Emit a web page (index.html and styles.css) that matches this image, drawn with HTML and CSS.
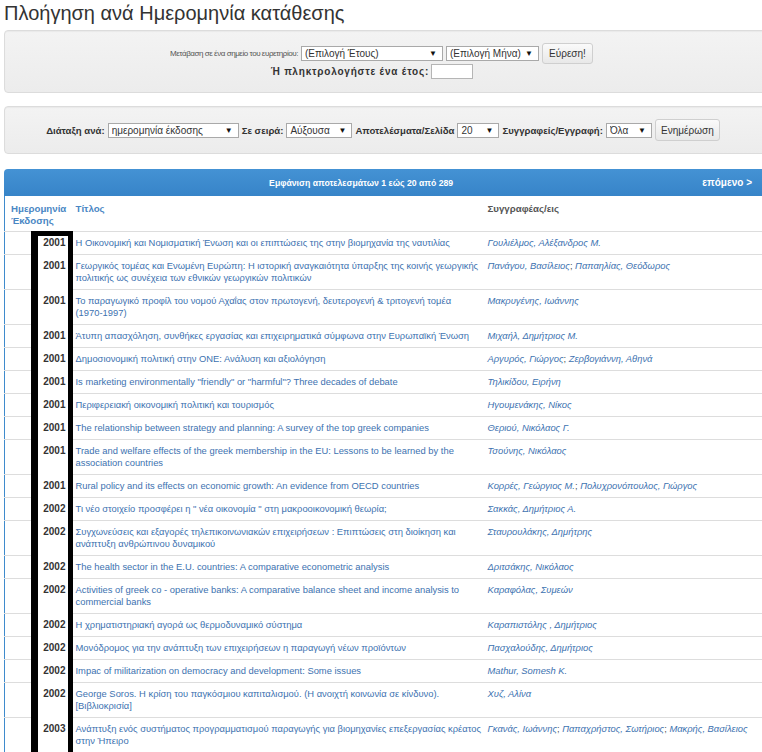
FILE: index.html
```html
<!DOCTYPE html>
<html lang="el">
<head>
<meta charset="utf-8">
<title>Πλοήγηση ανά Ημερομηνία κατάθεσης</title>
<link rel="stylesheet" href="styles.css">
</head>
<body>
<div class="page">
  <h2 class="title">Πλοήγηση ανά Ημερομηνία κατάθεσης</h2>

  <form class="well jump">
    <div class="jump-row">
      <span class="lbl">Μετάβαση σε ένα σημείο του ευρετηρίου:</span>
      <span class="sel sel-year"><select><option>(Επιλογή Έτους)</option></select></span>
      <span class="sel sel-month"><select><option>(Επιλογή Μήνα)</option></select></span>
      <button type="button" class="btn btn-find">Εύρεση!</button>
    </div>
    <div class="jump-row2">
      <span class="lbl-wide">Ή πληκτρολογήστε ένα έτος:</span>
      <input class="year-input" type="text">
    </div>
  </form>

  <form class="well sort">
    <span class="lbl-b">Διάταξη ανά:</span>
    <span class="sel sel-by"><select><option>ημερομηνία έκδοσης</option></select></span>
    <span class="lbl-b">Σε σειρά:</span>
    <span class="sel sel-order"><select><option>Αύξουσα</option></select></span>
    <span class="lbl-b">Αποτελέσματα/Σελίδα</span>
    <span class="sel sel-rpp"><select><option>20</option></select></span>
    <span class="lbl-b">Συγγραφείς/Εγγραφή:</span>
    <span class="sel sel-auth"><select><option>Όλα</option></select></span>
    <button type="button" class="btn btn-update">Ενημέρωση</button>
  </form>

  <div class="results">
    <div class="results-head">
      <span class="count">Εμφάνιση αποτελεσμάτων 1 εώς 20 από 289</span>
      <a class="next" href="#">επόμενο &gt;</a>
    </div>
    <table class="items">
      <colgroup><col class="c-date"><col class="c-title"><col class="c-auth"></colgroup>
      <thead>
        <tr>
          <th class="th-date"><a href="#">Ημερομηνία Έκδοσης</a></th>
          <th class="th-title"><a href="#">Τίτλος</a></th>
          <th class="th-auth">Συγγραφέας/εις</th>
        </tr>
      </thead>
      <tbody>
        <tr><td class="yr"><span>2001</span></td><td class="ti"><a href="#">Η Οικονομική και Νομισματική Ένωση και οι επιπτώσεις της στην βιομηχανία της ναυτιλίας</a></td><td><a class="au" href="#">Γουλιέλμος, Αλέξανδρος Μ.</a></td></tr>
        <tr><td class="yr"><span>2001</span></td><td class="ti"><a href="#">Γεωργικός τομέας και Ενωμένη Ευρώπη: Η ιστορική αναγκαιότητα ύπαρξης της κοινής γεωργικής<br>πολιτικής ως συνέχεια των εθνικών γεωργικών πολιτικών</a></td><td><a class="au" href="#">Πανάγου, Βασίλειος</a>; <a class="au" href="#">Παπαηλίας, Θεόδωρος</a></td></tr>
        <tr><td class="yr"><span>2001</span></td><td class="ti"><a href="#">Το παραγωγικό προφίλ του νομού Αχαΐας στον πρωτογενή, δευτερογενή &amp; τριτογενή τομέα<br>(1970-1997)</a></td><td><a class="au" href="#">Μακρυγένης, Ιωάννης</a></td></tr>
        <tr><td class="yr"><span>2001</span></td><td class="ti"><a href="#">Άτυπη απασχόληση, συνθήκες εργασίας και επιχειρηματικά σύμφωνα στην Ευρωπαϊκή Ένωση</a></td><td><a class="au" href="#">Μιχαήλ, Δημήτριος Μ.</a></td></tr>
        <tr><td class="yr"><span>2001</span></td><td class="ti"><a href="#">Δημοσιονομική πολιτική στην ΟΝΕ: Ανάλυση και αξιολόγηση</a></td><td><a class="au" href="#">Αργυρός, Γιώργος</a>; <a class="au" href="#">Ζερβογιάννη, Αθηνά</a></td></tr>
        <tr><td class="yr"><span>2001</span></td><td class="ti"><a href="#">Is marketing environmentally "friendly" or "harmful"? Three decades of debate</a></td><td><a class="au" href="#">Τηλικίδου, Ειρήνη</a></td></tr>
        <tr><td class="yr"><span>2001</span></td><td class="ti"><a href="#">Περιφερειακή οικονομική πολιτική και τουρισμός</a></td><td><a class="au" href="#">Ηγουμενάκης, Νίκος</a></td></tr>
        <tr><td class="yr"><span>2001</span></td><td class="ti"><a href="#">The relationship between strategy and planning: A survey of the top greek companies</a></td><td><a class="au" href="#">Θεριού, Νικόλαος Γ.</a></td></tr>
        <tr><td class="yr"><span>2001</span></td><td class="ti"><a href="#">Trade and welfare effects of the greek membership in the EU: Lessons to be learned by the<br>association countries</a></td><td><a class="au" href="#">Τσούνης, Νικόλαος</a></td></tr>
        <tr><td class="yr"><span>2001</span></td><td class="ti"><a href="#">Rural policy and its effects on economic growth: An evidence from OECD countries</a></td><td><a class="au" href="#">Κορρές, Γεώργιος Μ.</a>; <a class="au" href="#">Πολυχρονόπουλος, Γιώργος</a></td></tr>
        <tr><td class="yr"><span>2002</span></td><td class="ti"><a href="#">Τι νέο στοιχείο προσφέρει η " νέα οικονομία " στη μακροοικονομική θεωρία;</a></td><td><a class="au" href="#">Σακκάς, Δημήτριος Α.</a></td></tr>
        <tr><td class="yr"><span>2002</span></td><td class="ti"><a href="#">Συγχωνεύσεις και εξαγορές τηλεπικοινωνιακών επιχειρήσεων : Επιπτώσεις στη διοίκηση και<br>ανάπτυξη ανθρώπινου δυναμικού</a></td><td><a class="au" href="#">Σταυρουλάκης, Δημήτρης</a></td></tr>
        <tr><td class="yr"><span>2002</span></td><td class="ti"><a href="#">The health sector in the E.U. countries: A comparative econometric analysis</a></td><td><a class="au" href="#">Δριτσάκης, Νικόλαος</a></td></tr>
        <tr><td class="yr"><span>2002</span></td><td class="ti"><a href="#">Activities of greek co - operative banks: A comparative balance sheet and income analysis to<br>commercial banks</a></td><td><a class="au" href="#">Καραφόλας, Συμεών</a></td></tr>
        <tr><td class="yr"><span>2002</span></td><td class="ti"><a href="#">Η χρηματιστηριακή αγορά ως θερμοδυναμικό σύστημα</a></td><td><a class="au" href="#">Καραπιστόλης , Δημήτριος</a></td></tr>
        <tr><td class="yr"><span>2002</span></td><td class="ti"><a href="#">Μονόδρομος για την ανάπτυξη των επιχειρήσεων η παραγωγή νέων προϊόντων</a></td><td><a class="au" href="#">Πασχαλούδης, Δημήτριος</a></td></tr>
        <tr><td class="yr"><span>2002</span></td><td class="ti"><a href="#">Impac of militarization on democracy and development: Some issues</a></td><td><a class="au" href="#">Mathur, Somesh K.</a></td></tr>
        <tr><td class="yr"><span>2002</span></td><td class="ti"><a href="#">George Soros. Η κρίση του παγκόσμιου καπιταλισμού. (Η ανοιχτή κοινωνία σε κίνδυνο).<br>[Βιβλιοκρισία]</a></td><td><a class="au" href="#">Χυζ, Αλίνα</a></td></tr>
        <tr><td class="yr"><span>2003</span></td><td class="ti"><a href="#">Ανάπτυξη ενός συστήματος προγραμματισμού παραγωγής για βιομηχανίες επεξεργασίας κρέατος<br>στην Ήπειρο</a></td><td><a class="au" href="#">Γκανάς, Ιωάννης</a>; <a class="au" href="#">Παπαχρήστος, Σωτήριος</a>; <a class="au" href="#">Μακρής, Βασίλειος</a></td></tr>
      </tbody>
    </table>
    <div class="marker"></div>
  </div>
</div>
</body>
</html>
```

FILE: styles.css
```css
html {
  overflow: hidden;
}

body {
  margin: 0;
  background: #fff;
  color: #333;
  font-family: "Liberation Sans", Arial, sans-serif;
  font-size: 10px;
}

.page {
  margin-left: 4px;
  width: 770px;
}

.title {
  margin: 0 0 4px 0;
  font-size: 20px;
  font-weight: normal;
  line-height: 26px;
  color: #333;
}

.well {
  margin: 0;
  background: linear-gradient(#f3f3f3, #ececec);
  border: 1px solid #dcdcdc;
  border-radius: 4px;
  box-shadow: inset 0 1px 1px rgba(0, 0, 0, 0.04);
}

.lbl {
  color: #555;
  font-size: 8px;
  letter-spacing: -0.45px;
}

.lbl-b {
  font-weight: bold;
  font-size: 9.6px;
  color: #333;
}

.lbl-wide {
  font-weight: bold;
  font-size: 10px;
  letter-spacing: 0.8px;
  color: #333;
}

/* jump box */
.jump {
  box-sizing: border-box;
  height: 63px;
  padding: 12px 15px 0 0;
}

.jump-row {
  display: flex;
  justify-content: center;
  align-items: center;
  gap: 3px;
  height: 21px;
}

.jump-row2 {
  display: flex;
  justify-content: center;
  align-items: center;
  gap: 2px;
  height: 15px;
  padding-right: 19px;
}

.sel {
  position: relative;
  display: inline-block;
  height: 15px;
}

.sel select {
  appearance: none;
  -webkit-appearance: none;
  box-sizing: border-box;
  height: 15px;
  width: 100%;
  margin: 0;
  padding: 0 0 0 3px;
  border: 1px solid #a9a9a9;
  border-radius: 0;
  background: #fff;
  color: #333;
  font-family: "Liberation Sans", Arial, sans-serif;
  font-size: 10px;
  line-height: 13px;
}

.sel::after {
  content: "▼";
  position: absolute;
  right: 6px;
  top: 2px;
  font-size: 8px;
  line-height: 11px;
  color: #111;
  pointer-events: none;
}

.sel-year { width: 142px; }
.sel-month { width: 93px; }
.sel-by { width: 131px; }
.sel-order { width: 66px; }
.sel-rpp { width: 42px; }
.sel-auth { width: 46px; }

.btn {
  box-sizing: border-box;
  margin: 0;
  padding: 0;
  border: 1px solid #cfcfcf;
  border-radius: 3px;
  background: linear-gradient(#fafafa, #e8e8e8);
  color: #333;
  font-family: "Liberation Sans", Arial, sans-serif;
  font-size: 10px;
}

.btn-find {
  width: 51px;
  height: 21px;
}

.btn-update {
  width: 65px;
  height: 22px;
}

.year-input {
  box-sizing: border-box;
  width: 42px;
  height: 15px;
  margin: 0;
  padding: 0;
  border: 1px solid #b5b5b5;
  background: #fff;
}

/* sort box */
.sort {
  margin-top: 13px;
  height: 48px;
  box-sizing: border-box;
  padding: 0 12px 0 0;
  display: flex;
  justify-content: center;
  align-items: center;
  gap: 3px;
}

/* results */
.results {
  position: relative;
  margin-top: 15px;
}

.results-head {
  display: flex;
  align-items: center;
  height: 27px;
  border-radius: 4px 4px 0 0;
  background: linear-gradient(#4492d4, #3784c8);
  color: #fff;
  font-weight: bold;
}

.count {
  flex: 1;
  text-align: center;
  font-size: 8.7px;
  padding-left: 16px;
}

.next {
  color: #fff;
  text-decoration: none;
  padding-right: 22px;
}

.items {
  width: 100%;
  border-collapse: collapse;
  table-layout: fixed;
  border-left: 1px solid #3f8bcd;
}

.c-date { width: 67px; }
.c-title { width: 412px; }

.items th {
  padding: 7px 4px 4px 4px;
  text-align: left;
  vertical-align: top;
  font-weight: bold;
  font-size: 9.7px;
  line-height: 12px;
  color: #555;
}

.items th a {
  color: #4a87c4;
  text-decoration: none;
}

.items th.th-date {
  padding-left: 6px;
}

.items td {
  padding: 5px 4px;
  border-top: 1px solid #dddddd;
  vertical-align: top;
  font-size: 9.4px;
  line-height: 12px;
  color: #555;
}

.items td.ti {
  white-space: nowrap;
  overflow: hidden;
}

.items td a {
  color: #3d72b0;
  text-decoration: none;
}

.items td a.au {
  font-style: italic;
}

.items td.yr {
  text-align: right;
  font-weight: bold;
  font-size: 10px;
  color: #333;
  padding-right: 6px;
}

.items td.yr span {
  position: relative;
  z-index: 2;
}

.marker {
  position: absolute;
  left: 27px;
  top: 62px;
  width: 30px;
  height: 700px;
  background: #fff;
  border-left: 7px solid #000;
  border-right: 5px solid #000;
  border-top: 5px solid #000;
  z-index: 1;
}
```
